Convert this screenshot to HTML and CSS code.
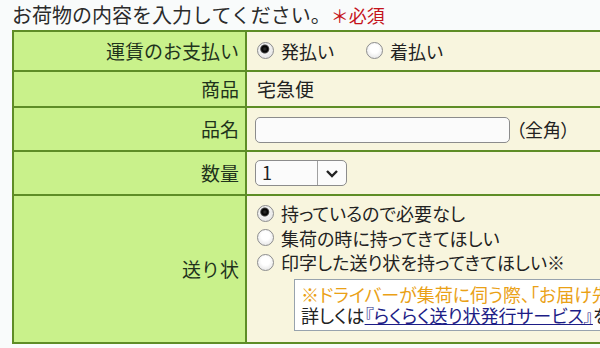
FILE: index.html
```html
<!DOCTYPE html>
<html lang="ja">
<head>
  <meta charset="UTF-8">
  <title>お荷物の内容</title>
  <link rel="stylesheet" href="styles.css">
</head>
<body>
  <p class="lead">お荷物の内容を入力してください。<span class="req">＊必須</span></p>

  <table class="form">
    <colgroup>
      <col class="c-label">
      <col class="c-field">
    </colgroup>
    <tr class="r-pay">
      <th>運賃のお支払い</th>
      <td>
        <label class="opt"><input type="radio" name="pay" checked>発払い</label>
        <label class="opt"><input type="radio" name="pay">着払い</label>
      </td>
    </tr>
    <tr class="r-item">
      <th>商品</th>
      <td class="plain">宅急便</td>
    </tr>
    <tr class="r-name">
      <th>品名</th>
      <td><input type="text" class="txt"><span class="note">（全角）</span></td>
    </tr>
    <tr class="r-qty">
      <th>数量</th>
      <td>
        <div class="select">
          <span class="val">1</span>
          <span class="arrow">
            <svg width="14" height="9" viewBox="0 0 14 9"><polyline points="2,2 7,7 12,2" fill="none" stroke="#222" stroke-width="2.4"/></svg>
          </span>
        </div>
      </td>
    </tr>
    <tr class="r-slip">
      <th>送り状</th>
      <td class="slip">
        <label class="line"><input type="radio" name="slip" checked>持っているので必要なし</label>
        <label class="line"><input type="radio" name="slip">集荷の時に持ってきてほしい</label>
        <label class="line"><input type="radio" name="slip">印字した送り状を持ってきてほしい※</label>
        <div class="info">
          <p class="warn">※ドライバーが集荷に伺う際、「お届け先の情報を記入した送り状」をお持ちします。</p>
          <p>詳しくは<a href="#">『らくらく送り状発行サービス』</a>をご覧ください。</p>
        </div>
      </td>
    </tr>
  </table>
</body>
</html>
```

FILE: styles.css
```css
html, body {
  margin: 0;
  overflow: hidden;
}
body {
  background: #f9fbfb;
  font-family: "Noto Sans CJK JP", "DejaVu Sans", sans-serif;
  color: #222;
  padding: 0 0 0 12px;
}
.lead {
  margin: 0;
  height: 30px;
  font-size: 20px;
  line-height: 30px;
  color: #2b2b2b;
  white-space: nowrap;
}
.req {
  color: #c4121a;
  font-size: 18px;
}
.form {
  border-collapse: collapse;
  table-layout: fixed;
  width: 660px;
  border: 2px solid #5e8d26;
}
.c-label { width: 233px; }
.form th, .form td {
  border: 2px solid #5e8d26;
  padding: 0;
  line-height: 22px;
  overflow: hidden;
}
.form th {
  background: #c9f18b;
  color: #1f331c;
  font-weight: normal;
  font-size: 19px;
  text-align: right;
  padding-right: 6px;
}
.form td {
  background: #f8f5de;
  font-size: 18px;
  padding-left: 10px;
  font-feature-settings: "palt";
  white-space: nowrap;
}
.r-pay { height: 40px; }
.r-item { height: 36px; }
.r-name { height: 44px; }
.r-qty { height: 44px; }
.r-slip { height: 148px; }
.form .plain {
  font-size: 19px;
}
.opt {
  display: inline-flex;
  align-items: center;
  margin-right: 28px;
}
input[type=radio] {
  appearance: none;
  width: 17px;
  height: 17px;
  margin: 0 7px 0 0;
  border: 1.5px solid #8d8d8d;
  border-radius: 50%;
  background: radial-gradient(circle at 50% 40%, #fff 35%, #dcdcdc 100%);
  flex: none;
}
input[type=radio]:checked {
  background: radial-gradient(circle at 45% 40%, #333 0, #000 3px, #444 4px, #f2f2f2 5px, #dcdcdc 100%);
}
.txt {
  width: 255px;
  height: 26px;
  box-sizing: border-box;
  border: 1.5px solid #8c8c8c;
  border-radius: 5px;
  background: #fbfbfb;
  vertical-align: middle;
  margin: 0 6px 0 -2px;
}
.note {
  font-size: 18px;
  vertical-align: middle;
}
.select {
  display: flex;
  width: 92px;
  height: 26px;
  box-sizing: border-box;
  border: 1.5px solid #8c8c8c;
  border-radius: 5px;
  background: #fbfbfb;
  margin-left: -2px;
}
.select .val {
  flex: 1;
  padding-left: 6px;
  font-size: 18px;
  line-height: 23px;
}
.select .arrow {
  width: 28px;
  border-left: 1px solid #a0a0a0;
  display: flex;
  align-items: center;
  justify-content: center;
}
.form .slip {
  vertical-align: top;
  padding-top: 5px;
}
.line {
  display: flex;
  align-items: center;
  height: 24.5px;
}
.info {
  margin: 4px 0 0 37px;
  background: #fff;
  border: 1px solid #98a3ad;
  border-right: none;
  padding: 4px 6px 4px;
  line-height: 21px;
}
.info p {
  margin: 0;
}
.warn {
  color: #eaa116;
}
.info a {
  color: #1d1d86;
}
```
